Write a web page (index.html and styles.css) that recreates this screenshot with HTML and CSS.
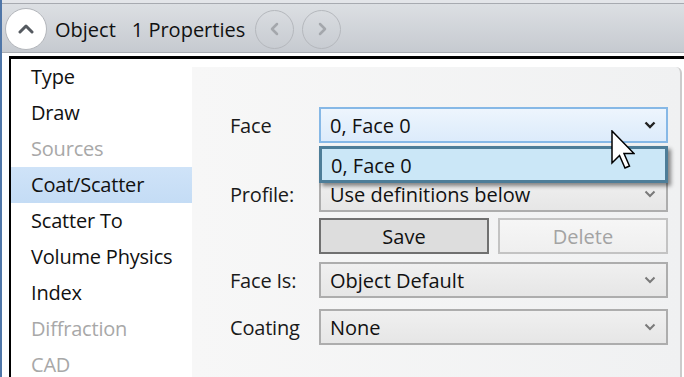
FILE: index.html
```html
<!DOCTYPE html>
<html>
<head>
  <link rel="stylesheet" href="styles.css">
</head>
<body>
  <div class="window">
    <div class="titlebar"></div>
    <div class="header">
      <button class="round up">
        <svg width="16" height="10" viewBox="0 0 16 10"><polyline points="2,8 8,2 14,8" /></svg>
      </button>
      <span class="title">Object</span>
      <span class="title count">1 Properties</span>
      <button class="round nav">
        <svg width="10" height="14" viewBox="0 0 10 14"><polyline points="7,2 2,7 7,12" /></svg>
      </button>
      <button class="round nav">
        <svg width="10" height="14" viewBox="0 0 10 14"><polyline points="3,2 8,7 3,12" /></svg>
      </button>
    </div>

    <div class="main">
      <ul class="sections">
        <li>Type</li>
        <li>Draw</li>
        <li class="disabled">Sources</li>
        <li class="selected">Coat/Scatter</li>
        <li>Scatter To</li>
        <li>Volume Physics</li>
        <li>Index</li>
        <li class="disabled">Diffraction</li>
        <li class="disabled">CAD</li>
      </ul>

      <div class="panel">
        <div class="row row-face">
          <span class="label">Face</span>
          <div class="combo active">
            <span>0, Face 0</span>
            <svg class="chevron" width="12" height="8" viewBox="0 0 12 8"><polyline points="1.5,1.5 6,6 10.5,1.5" /></svg>
            <div class="popup">0, Face 0</div>
          </div>
        </div>
        <div class="row row-profile">
          <span class="label">Profile:</span>
          <div class="combo">
            <span>Use definitions below</span>
            <svg class="chevron" width="12" height="8" viewBox="0 0 12 8"><polyline points="1.5,1.5 6,6 10.5,1.5" /></svg>
          </div>
        </div>
        <div class="row row-buttons">
          <span class="label"></span>
          <div class="buttons">
            <button class="btn save">Save</button>
            <button class="btn delete">Delete</button>
          </div>
        </div>
        <div class="row row-faceis">
          <span class="label">Face Is:</span>
          <div class="combo">
            <span>Object Default</span>
            <svg class="chevron" width="12" height="8" viewBox="0 0 12 8"><polyline points="1.5,1.5 6,6 10.5,1.5" /></svg>
          </div>
        </div>
        <div class="row row-coating">
          <span class="label">Coating</span>
          <div class="combo">
            <span>None</span>
            <svg class="chevron" width="12" height="8" viewBox="0 0 12 8"><polyline points="1.5,1.5 6,6 10.5,1.5" /></svg>
          </div>
        </div>
      </div>
    </div>

    <svg class="cursor" width="24" height="40" viewBox="0 0 24 40">
      <path d="M1 1 L1 33 L8.5 25.5 L14 38 L18.5 36 L13 23.5 L23 23.5 Z" />
    </svg>
  </div>
</body>
</html>
```

FILE: styles.css
```css
body {
  margin: 0;
  padding: 0;
  background: #ffffff;
  font-family: 'Open Sans', 'Noto Sans', sans-serif;
  color: #111111;
  overflow: hidden;
}

.window {
  position: relative;
  width: 684px;
  height: 377px;
  box-sizing: border-box;
  border-left: 2px solid #4f76a8;
  background: #ffffff;
}

.titlebar {
  height: 3px;
  background: #e3e5e9;
}

.header {
  display: flex;
  align-items: center;
  padding: 2px 0 0 3px;
  box-sizing: border-box;
  height: 50px;
  border-top: 1px solid #a7aab0;
  border-bottom: 1px solid #a9adb3;
  background: linear-gradient(to bottom, #dcdfe3, #c6cad0);
}

.round {
  display: flex;
  align-items: center;
  justify-content: center;
  padding: 0;
  border-radius: 50%;
  box-sizing: border-box;
}

.round svg polyline {
  fill: none;
  stroke-linecap: round;
  stroke-linejoin: round;
}

.up {
  width: 42px;
  height: 42px;
  background: #ffffff;
  border: 1.5px solid #b3b6bb;
}

.up svg polyline {
  stroke: #555a60;
  stroke-width: 3;
}

.nav {
  width: 39px;
  height: 39px;
  background: transparent;
  border: 1.5px solid #b5b8bd;
  margin-left: 8px;
}

.nav svg polyline {
  stroke: #a4a7ac;
  stroke-width: 2.5;
}

.title {
  font-size: 20px;
  font-weight: 500;
  color: #111111;
  margin-left: 8px;
}

.title.count {
  margin-left: 16px;
  margin-right: 2px;
}

.main {
  display: flex;
  margin: 3px 0 0 7px;
  height: 318px;
  border-top: 3px solid #000000;
  border-left: 2px solid #000000;
}

.sections {
  list-style: none;
  margin: 0;
  padding: 0;
  width: 181px;
  flex-shrink: 0;
  background: #ffffff;
}

.sections li {
  height: 36px;
  line-height: 36px;
  padding-left: 20px;
  font-size: 20px;
  color: #111111;
  letter-spacing: -0.2px;
}

.sections li.disabled {
  color: #a8a8a8;
}

.sections li.selected {
  background: linear-gradient(to bottom, #cfe3f8, #c4dcf5);
}

.panel {
  flex: 1;
  margin: 8px 2px 0 0;
  padding: 40px 0 0 38px;
  background: linear-gradient(to right, #f7f7f7, #f0f1f2);
  border-right: 2px solid #cbcbcb;
  border-top-right-radius: 6px;
}

.row {
  display: flex;
  align-items: center;
  position: relative;
}

.row-profile { margin-top: 33px; }
.row-buttons { margin-top: 6px; }
.row-faceis { margin-top: 8px; }
.row-coating { margin-top: 11px; }

.label {
  width: 89px;
  flex-shrink: 0;
  font-size: 20px;
  color: #1a1a1a;
  letter-spacing: -0.2px;
}

.combo {
  position: relative;
  display: flex;
  align-items: center;
  width: 349px;
  height: 36px;
  box-sizing: border-box;
  padding-left: 9px;
  border: 2px solid #adadad;
  background: linear-gradient(to bottom, #f0f0f0, #e6e6e6);
  font-size: 20px;
  color: #111111;
}

.combo.active {
  border-color: #86b8e6;
  background: linear-gradient(to bottom, #edf5fd, #dcebfb);
}

.chevron {
  position: absolute;
  right: 10px;
  top: 12px;
}

.chevron polyline {
  fill: none;
  stroke: #7a7a7a;
  stroke-width: 2;
}

.combo.active .chevron polyline {
  stroke: #222222;
  stroke-width: 2.4;
}

.popup {
  position: absolute;
  left: -2px;
  top: 37px;
  width: 349px;
  height: 37px;
  box-sizing: border-box;
  padding-left: 9px;
  line-height: 33px;
  border: 3px solid #4d7d98;
  background: #cbe7f7;
  box-shadow: 3px 3px 4px rgba(0, 0, 0, 0.45);
  z-index: 2;
}

.buttons {
  display: flex;
  gap: 9px;
}

.btn {
  width: 170px;
  height: 36px;
  box-sizing: border-box;
  font-family: inherit;
  font-size: 20px;
  padding: 0;
}

.btn.save {
  background: #dddddd;
  border: 2px solid #707070;
  color: #111111;
}

.btn.delete {
  background: linear-gradient(to bottom, #f6f6f6, #efefef);
  border: 2px solid #c3c3c3;
  color: #a3a3a3;
}

.cursor {
  position: absolute;
  left: 609px;
  top: 130px;
  z-index: 5;
}

.cursor path {
  fill: #ffffff;
  stroke: #000000;
  stroke-width: 1.5;
  stroke-linejoin: miter;
}
```
